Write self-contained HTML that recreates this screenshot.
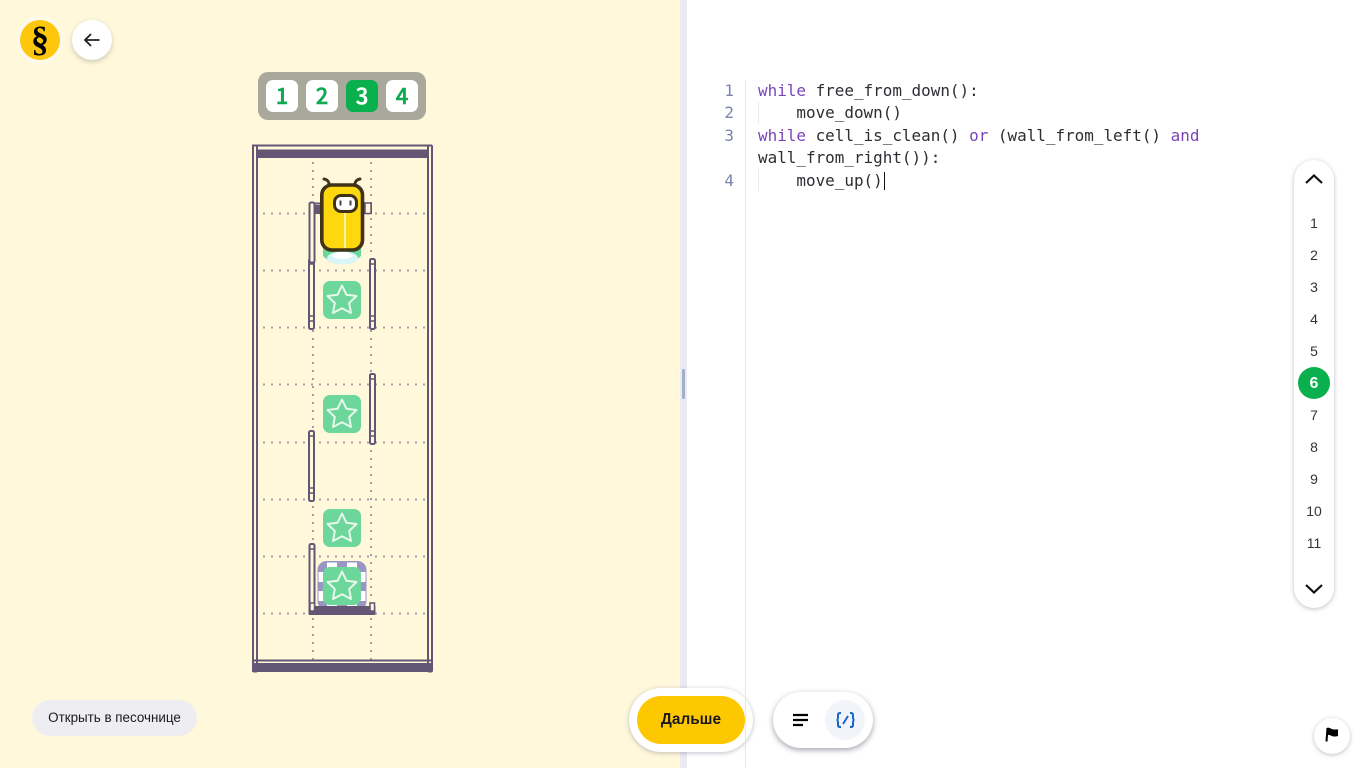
<!DOCTYPE html>
<html lang="ru"><head><meta charset="utf-8"><title>Задача</title>
<style>
html,body{margin:0;padding:0;width:1366px;height:768px;overflow:hidden;background:#fff;font-family:"Liberation Sans","Noto Sans CJK SC",sans-serif;color:#000}
.abs{position:absolute}
#left{left:0;top:0;width:680px;height:768px;background:#fff8db}
#split{left:680px;top:0;width:7px;height:768px;background:#ebe9f2}
#handle{left:682px;top:369px;width:3px;height:30px;background:#a3b0cb;border-radius:2px}
#logo{left:20px;top:20px;width:40px;height:40px;border-radius:50%;background:#fcc70c;box-shadow:0 0 0 4px rgba(255,255,255,.35);text-align:center;font:bold 36px/39px "Liberation Serif",serif}
#back{left:72px;top:20px;width:40px;height:40px;border-radius:50%;background:#fff;box-shadow:0 2px 5px rgba(60,60,60,.25)}
#levels{left:258px;top:72px;width:168px;height:48px;border-radius:10px;background:#a9a99b}
.lv{position:absolute;top:8px;width:32px;height:32px;border-radius:7px;background:#fff;color:#10a955;text-align:center;font:500 22px/31px "Noto Sans CJK JP","Liberation Sans",sans-serif;-webkit-text-stroke:.5px currentColor}
.lv.on{background:#09b04d;color:#fff}
#sand{left:32px;top:700px;width:165px;height:36px;border-radius:18px;background:#eeeef2;text-align:center;font-size:13.4px;line-height:35px;color:#1a1a1a}
#next-w{left:629px;top:688px;width:124px;height:64px;border-radius:32px;background:#fff;box-shadow:0 1px 5px rgba(70,70,100,.35)}
#next{position:absolute;left:8px;top:8px;width:108px;height:48px;border-radius:24px;background:#fec801;text-align:center;font-weight:bold;font-size:15.4px;line-height:48px;color:#1a1a1a}
#tools{left:773px;top:692px;width:100px;height:56px;border-radius:28px;background:#fff;box-shadow:0 2px 6px rgba(50,50,70,.45)}
#tb{position:absolute;left:52px;top:8px;width:40px;height:40px;border-radius:50%;background:#f1f5fa}
#code{left:758px;top:80px;font:15.94px/22.4px "DejaVu Sans Mono",monospace;color:#2d2d33;white-space:pre;margin:0}
#code b{font-weight:normal;color:#7a45b8}
#nums{left:716px;top:80px;width:18px;text-align:right;font:15.94px/22.4px "DejaVu Sans Mono",monospace;color:#7a84ad;white-space:pre}
#gut{left:745px;top:80px;width:1px;height:688px;background:#e5e5ea}
#cur{left:883.5px;top:172px;width:1px;height:18px;background:#111}
.ig{position:absolute;width:1px;background:#e9e9ee;left:758px}
#pager{left:1294px;top:160px;width:40px;height:448px;border-radius:20px;background:#fff;box-shadow:0 1px 5px rgba(70,70,100,.35)}
.pg{position:absolute;left:4px;width:32px;height:32px;border-radius:50%;text-align:center;font-size:14px;line-height:32px;color:#333}
.pg.on{background:#09b04d;color:#fff;font-weight:bold;font-size:16px;line-height:34px}
#flag{left:1314px;top:718px;width:36px;height:36px;border-radius:50%;background:#fff;box-shadow:0 1px 4px rgba(70,70,100,.35)}
svg{position:absolute;overflow:visible}
</style></head><body>
<div id="left" class="abs"></div>
<div id="split" class="abs"></div><div id="handle" class="abs"></div>
<div id="logo" class="abs">§</div>
<div id="back" class="abs"><svg style="left:0;top:0" width="40" height="40" fill="none" stroke="#222" stroke-width="1.8"><path d="M27.500 20H13M19 14l-6 6 6 6"/></svg></div>
<div id="levels" class="abs"><div class="lv" style="left:8px">1</div><div class="lv" style="left:48px">2</div><div class="lv on" style="left:88px">3</div><div class="lv" style="left:128px">4</div></div>

<svg style="left:0;top:0" width="680" height="768">
<defs>
<g id="star"><rect x="-19" y="-19" width="38" height="38" rx="7" fill="#6dd69b"/><path d="M0-14.500 4.400-5.300 14.500-4 7.200 3 9 13 0 8.200-9 13-7.200 3-14.500-4-4.400-5.300Z" fill="none" stroke="#e6f9ea" stroke-width="2" stroke-linejoin="round"/></g>
<g id="wall"><rect x="-2.500" y="0" width="5" height="70" rx="1.500" fill="#fff8db" stroke="#645675" stroke-width="2"/><path d="M-2.500 5H2.500M-2.500 57H2.500M-2.500 62H2.500" stroke="#645675" stroke-width="1.500"/></g>
</defs>
<g fill="none" stroke="#a59fab" stroke-width="2" stroke-dasharray="2 6">
<path d="M263 213.500H425M263 270.500H425M263 327.500H425M263 384.500H425M263 442.500H425M263 499.500H425M263 556.500H425M263 613.500H425"/>
<path d="M313 162V660M371 162V660"/>
</g>
<g fill="none" stroke="#645675" stroke-width="2">
<rect x="253" y="145.500" width="4" height="526" rx="1"/>
<rect x="428" y="145.500" width="4" height="526" rx="1"/>
<path d="M252 145.500H432M252 660.500H432"/>
</g>
<rect x="256" y="149.500" width="172" height="8.500" fill="#645675"/>
<rect x="252" y="663" width="180" height="9" rx="1" fill="#645675"/>
<use href="#wall" x="311.500" y="259"/>
<use href="#wall" x="372.500" y="259"/>
<use href="#wall" x="372.500" y="374"/>
<use href="#wall" x="311.500" y="431"/>
<use href="#star" x="342" y="300"/>
<use href="#star" x="342" y="414"/>
<use href="#star" x="342" y="528"/>
<rect x="317.500" y="561" width="49" height="49" rx="9" fill="#9a96c4"/>
<g fill="#fff"><rect x="327" y="562.500" width="10" height="5"/><rect x="347" y="562.500" width="10" height="5"/><rect x="327" y="604" width="10" height="5"/><rect x="347" y="604" width="10" height="5"/><rect x="318.500" y="572" width="5" height="10"/><rect x="318.500" y="591" width="5" height="10"/><rect x="360.500" y="572" width="5" height="10"/><rect x="360.500" y="591" width="5" height="10"/></g>
<use href="#star" x="342" y="586"/>
<rect x="309.500" y="544" width="5" height="65" rx="1.500" fill="#fff8db" stroke="#645675" stroke-width="2"/>
<path d="M309 549H315" stroke="#645675" stroke-width="1.500"/>
<rect x="308.500" y="606" width="67" height="9" rx="1" fill="#645675"/>
<rect x="310" y="603" width="4.500" height="8" fill="#fff8db" stroke="#645675" stroke-width="1.500"/>
<rect x="370" y="603" width="4.500" height="8" fill="#fff8db" stroke="#645675" stroke-width="1.500"/>
<path d="M309.500 203.500H372" stroke="#645675" stroke-width="2"/>
<rect x="312" y="205" width="60" height="9" fill="#645675"/>
<rect x="309.500" y="202.500" width="5" height="60" rx="1.500" fill="#fff8db" stroke="#645675" stroke-width="2"/>
<rect x="365" y="203" width="6" height="10.500" fill="#fff8db" stroke="#645675" stroke-width="1.500"/>
<path d="M323 240H361V256L354 262H330L323 256Z" fill="#6dd69b"/>
<ellipse cx="342.500" cy="258" rx="15.500" ry="6.500" fill="#d8f5f7"/>
<ellipse cx="342.500" cy="255.500" rx="10" ry="3.500" fill="#fff"/>
<path d="M329.500 186c-.5-4.500-2-6.500-5.500-7M354.500 186c.5-4.500 2-6.500 5.500-7" fill="none" stroke="#3f3322" stroke-width="3" stroke-linecap="round"/>
<rect x="321.800" y="185" width="40.700" height="65" rx="10" fill="#fed80f" stroke="#3f3219" stroke-width="3.600"/>
<rect x="334.500" y="195.500" width="22" height="16" rx="6.500" fill="#fff" stroke="#3f3219" stroke-width="3"/>
<path d="M340.500 200.500v5M350.500 200.500v5" stroke="#444" stroke-width="2"/>
<path d="M345 213V248" stroke="#fff4a8" stroke-width="2"/>
</svg>

<div id="sand" class="abs">Открыть в песочнице</div>
<div id="next-w" class="abs"><div id="next">Дальше</div></div>
<div id="tools" class="abs">
<svg style="left:0;top:0" width="100" height="56" fill="none" stroke="#000" stroke-width="2.200"><path d="M20 23H35M20 28H35M20 33H30"/></svg>
<div id="tb"><svg style="left:0;top:0" width="40" height="40" fill="none" stroke="#1a66c8" stroke-width="2"><path d="M16 13h-1c-1.500 0-2 .8-2 2v2.500c0 1.200-.5 2.500-1.500 2.500 1 0 1.500 1.300 1.500 2.500V25c0 1.200.5 2 2 2h1M25 13h1c1.500 0 2 .8 2 2v2.500c0 1.200.5 2.500 1.500 2.500-1 0-1.500 1.300-1.500 2.500V25c0 1.200-.5 2-2 2h-1M23 16l-5 8"/></svg></div>
</div>

<div id="gut" class="abs"></div>
<div id="nums" class="abs">1
2
3

4</div>
<pre id="code" class="abs"><b>while</b> free_from_down():
    move_down()
<b>while</b> cell_is_clean() <b>or</b> (wall_from_left() <b>and</b>
wall_from_right()):
    move_up()</pre>
<div class="ig" style="top:102px;height:22px"></div>
<div class="ig" style="top:169px;height:22px"></div>
<div id="cur" class="abs"></div>

<div id="pager" class="abs">
<svg style="left:0;top:0" width="40" height="448" fill="none" stroke="#111" stroke-width="2.200"><path d="M12 23 20 15.500 28 23M12 425 20 432.500 28 425"/></svg>
<div class="pg" style="top:47px">1</div>
<div class="pg" style="top:79px">2</div>
<div class="pg" style="top:111px">3</div>
<div class="pg" style="top:143px">4</div>
<div class="pg" style="top:175px">5</div>
<div class="pg on" style="top:207px">6</div>
<div class="pg" style="top:239px">7</div>
<div class="pg" style="top:271px">8</div>
<div class="pg" style="top:303px">9</div>
<div class="pg" style="top:335px">10</div>
<div class="pg" style="top:367px">11</div>
</div>

<div id="flag" class="abs"><svg style="left:0;top:0" width="36" height="36"><path d="M13.500 10L12.500 23.500" stroke="#000" stroke-width="2"/><path d="M13.500 9.500c2 0 3 1.200 5 1.700 2 .5 3.500.3 5.500 0v6.800c-2 .5-3.500.8-5.500.2-2-.7-3-1.400-5.200-1.400Z" fill="#000"/></svg></div>
</body></html>
